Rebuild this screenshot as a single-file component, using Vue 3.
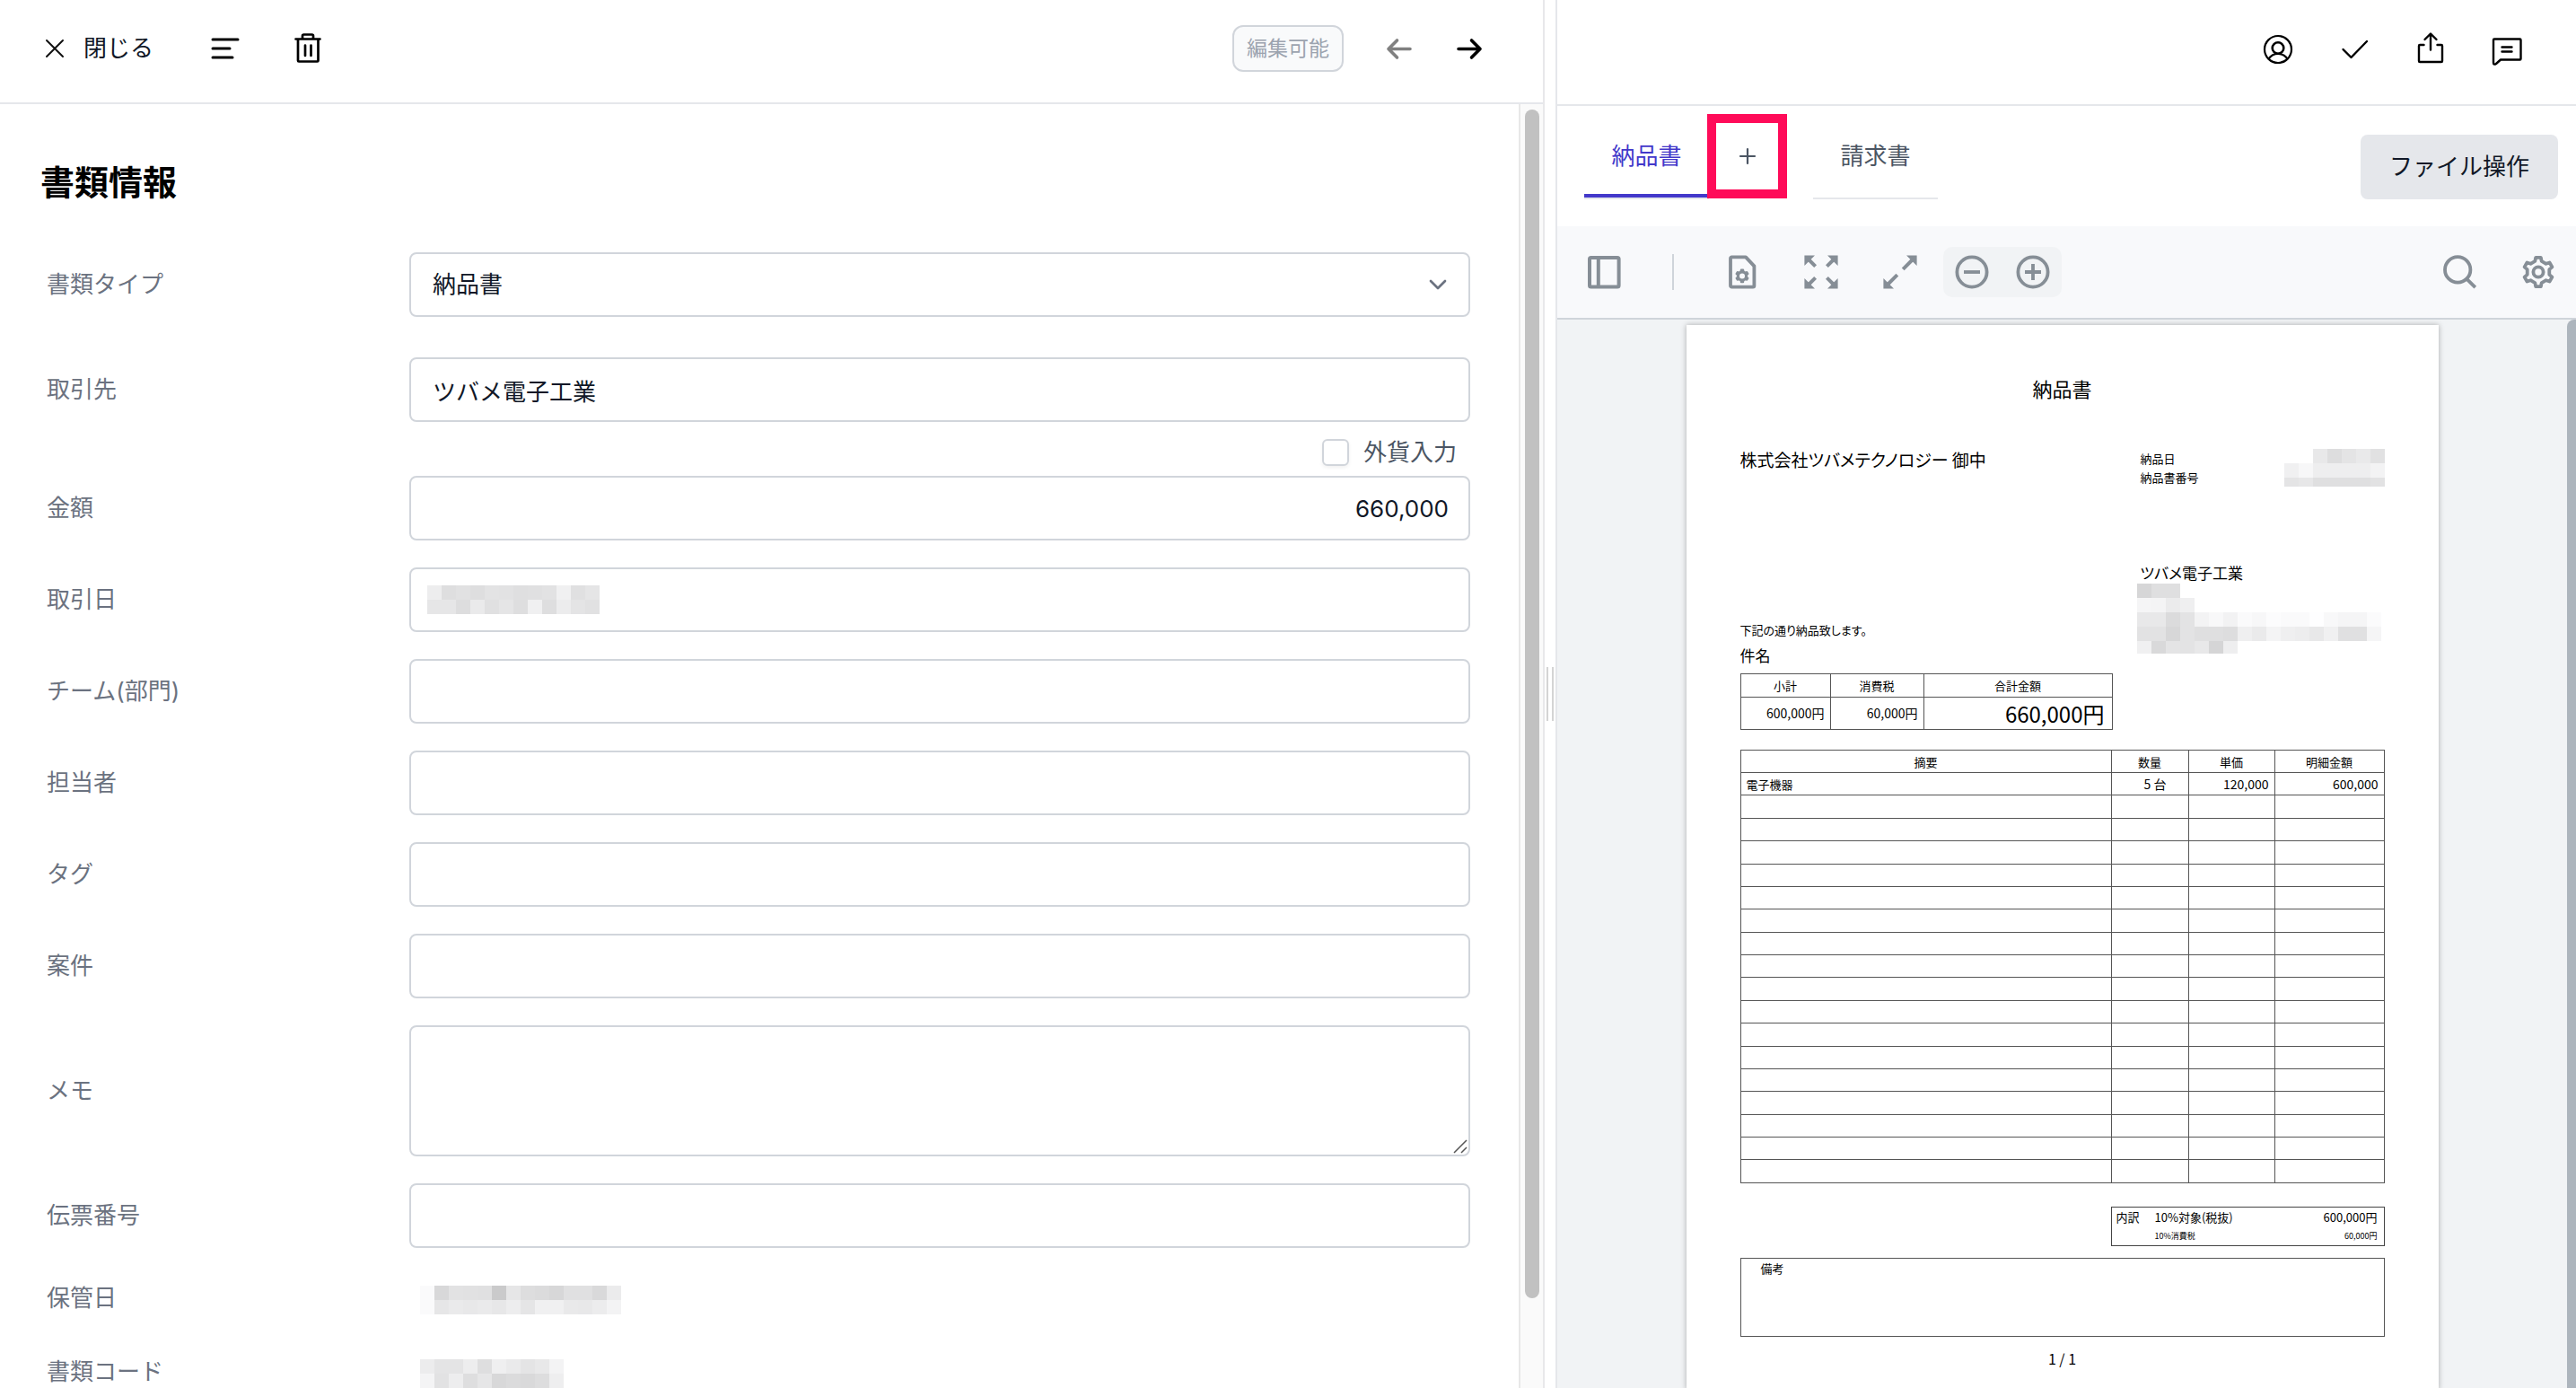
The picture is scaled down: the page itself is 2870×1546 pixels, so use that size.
<script setup>
import { ref, h } from 'vue'

const docType = ref('納品書')
const partner = ref('ツバメ電子工業')
const amount = ref('660,000')
const foreign = ref(false)
const memo = ref('')
const slip = ref('')

const midFields = ref([
  { id: 'team', label: 'チーム(部門)', value: '' },
  { id: 'owner', label: '担当者', value: '' },
  { id: 'tag', label: 'タグ', value: '' },
  { id: 'project', label: '案件', value: '' },
])

// Masked values: each number is a grey level, null leaves the cell empty.
const masks = {
  date: [
    [237, 222, 225, 222, 227, 226, 223, 224, 226, 240, 224, 229],
    [230, 230, 221, 234, 224, 229, 222, 240, 222, 236, 228, 225],
  ],
  stored: [
    [250, 216, 226, 225, 224, 202, 230, 221, 219, 215, 224, 224, 217, 235],
    [250, 230, 234, 232, 234, 231, 237, 229, 240, 240, 233, 232, 236, 243],
  ],
  code: [
    [236, 228, 228, 237, 222, 239, 234, 228, 232, 243],
    [244, 226, 237, 222, 230, 216, 219, 217, 221, 238],
  ],
  number: [
    [null, null, 232, 221, 228, 233, 225],
    [240, 247, 238, 238, 238, 238, 243],
    [228, 231, 223, 223, 223, 223, 226],
  ],
  address: [
    [214, 223, 223],
    [245, 244, 235, 239],
    [232, 232, 219, 227, 243, 248, 242, 250, 247, 252, 250, 250, 254, 248, 245, 245, 251],
    [226, 226, 215, 227, 223, 223, 221, 239, 234, 244, 239, 237, 232, 240, 224, 224, 245],
    [240, 217, 228, 227, 232, 213, 238],
  ],
}

const Mask = (props) => {
  const size = 16
  const cols = Math.max(...props.rows.map((r) => r.length))
  const height = props.rows.length * size - (props.trim || 0)
  const cells = props.rows.flatMap((row, y) =>
    row.map((g, x) =>
      g === null
        ? null
        : h('rect', { x: x * size, y: y * size, width: size, height: size, fill: `rgb(${g},${g},${g + 1})` })
    )
  )
  return h(
    'svg',
    { width: cols * size, height, viewBox: `0 0 ${cols * size} ${height}`, 'shape-rendering': 'crispEdges', 'aria-hidden': 'true' },
    cells
  )
}
Mask.props = ['rows', 'trim']

// Six-tooth gear outline around (cx, cy).
function gear(cx, cy, outer, inner) {
  const pts = []
  for (let i = 0; i < 6; i++) {
    const base = i * 60 - 90
    for (const [r, a] of [[inner, -17], [outer, -10], [outer, 10], [inner, 17]]) {
      const t = ((base + a) * Math.PI) / 180
      pts.push(`${(cx + r * Math.cos(t)).toFixed(2)} ${(cy + r * Math.sin(t)).toFixed(2)}`)
    }
  }
  return 'M' + pts.join('L') + 'Z'
}
const bigGear = gear(12, 12, 8.2, 6.3)
const smallGear = gear(12, 14.2, 3.5, 2.7)

const items = [
  { name: '電子機器', qty: '5 台', price: '120,000', total: '600,000' },
  ...Array.from({ length: 17 }, () => ({ name: '', qty: '', price: '', total: '' })),
]
</script>

<template>
  <div class="app">
    <section class="left">
      <header class="bar">
        <button class="plain close" type="button">
          <svg width="24" height="24" viewBox="0 0 24 24" fill="none" stroke="#111" stroke-width="2" stroke-linecap="round"><path d="M3 3l18 18M21 3L3 21" /></svg>
          <span>閉じる</span>
        </button>
        <button class="plain menu" type="button" aria-label="メニュー">
          <svg width="40" height="40" viewBox="0 0 40 40" fill="none" stroke="#000" stroke-width="3" stroke-linecap="round"><path d="M6 10h28M6 20h19M6 30h22" /></svg>
        </button>
        <button class="plain trash" type="button" aria-label="削除">
          <svg width="40" height="40" viewBox="0 0 40 40" fill="none" stroke="#000" stroke-width="2.7" stroke-linejoin="round" stroke-linecap="round"><path d="M6.500 9.500h27M9 9.500V33.500a1 1 0 0 0 1 1h20.500a1 1 0 0 0 1-1V9.500M14 9V6a1.500 1.500 0 0 1 1.500-1.500h9A1.500 1.500 0 0 1 26 6v3M17 16.500v11.500M23.500 16.500v11.500" /></svg>
        </button>
        <span class="grow"></span>
        <button class="badge" type="button">編集可能</button>
        <button class="plain prev" type="button" aria-label="前へ">
          <svg width="40" height="40" viewBox="0 0 40 40" fill="none" stroke="#808080" stroke-width="3.600" stroke-linecap="round" stroke-linejoin="round"><path d="M32 20.500H8M17.500 11L8 20.500l9.500 9.500" /></svg>
        </button>
        <button class="plain next" type="button" aria-label="次へ">
          <svg width="40" height="40" viewBox="0 0 40 40" fill="none" stroke="#000" stroke-width="3.600" stroke-linecap="round" stroke-linejoin="round"><path d="M8 20.500h24M22.500 11l9.500 9.500-9.500 9.500" /></svg>
        </button>
      </header>

      <div class="scroll">
        <form class="form" @submit.prevent>
          <h1>書類情報</h1>

          <div class="row">
            <label for="type">書類タイプ</label>
            <div class="control">
              <select id="type" v-model="docType" class="field">
                <option>納品書</option>
                <option>請求書</option>
              </select>
              <svg class="chevron" width="24" height="24" viewBox="0 0 24 24" fill="none" stroke="#6b7280" stroke-width="2.700" stroke-linecap="round" stroke-linejoin="round"><path d="M4 8l8 8 8-8" /></svg>
            </div>
          </div>

          <div class="row wide">
            <label for="partner">取引先</label>
            <input id="partner" v-model="partner" class="field kana" type="text" />
          </div>

          <div class="currency">
            <input id="foreign" v-model="foreign" type="checkbox" />
            <label for="foreign">外貨入力</label>
          </div>

          <div class="row">
            <label for="amount">金額</label>
            <input id="amount" v-model="amount" class="field number" type="text" />
          </div>

          <div class="row gap">
            <label for="date">取引日</label>
            <div class="control">
              <input id="date" class="field" type="text" />
              <Mask class="mask" :rows="masks.date" />
            </div>
          </div>

          <div v-for="f in midFields" :key="f.id" class="row gap">
            <label :for="f.id">{{ f.label }}</label>
            <input :id="f.id" v-model="f.value" class="field" type="text" />
          </div>

          <div class="row gap">
            <label for="memo">メモ</label>
            <div class="control">
              <textarea id="memo" v-model="memo" class="field"></textarea>
              <svg class="grip" width="16" height="16" viewBox="0 0 16 16" stroke="#555" stroke-width="1.500"><path d="M1 15L15 1M9 15l6-6" /></svg>
            </div>
          </div>

          <div class="row gap">
            <label for="slip">伝票番号</label>
            <input id="slip" v-model="slip" class="field" type="text" />
          </div>

          <dl class="static">
            <div class="pair">
              <dt>保管日</dt>
              <dd><Mask :rows="masks.stored" /></dd>
            </div>
            <div class="pair">
              <dt>書類コード</dt>
              <dd><Mask :rows="masks.code" /></dd>
            </div>
          </dl>
        </form>
        <div class="track" aria-hidden="true"><div class="thumb"></div></div>
      </div>
    </section>

    <div class="splitter" aria-hidden="true"><span></span></div>

    <section class="right">
      <header class="bar actions">
        <button class="plain" type="button" aria-label="ユーザー">
          <svg width="40" height="40" viewBox="0 0 40 40" fill="none" stroke="#000" stroke-width="2.200"><circle cx="20" cy="20" r="15" /><circle cx="20" cy="18.500" r="6.300" stroke-width="2.600" /><path d="M9.500 30.500C12 27 15.500 24.900 20 24.900s8 2.100 10.500 5.600" /></svg>
        </button>
        <button class="plain" type="button" aria-label="確認">
          <svg width="40" height="40" viewBox="0 0 40 40" fill="none" stroke="#000" stroke-width="2.400" stroke-linecap="round" stroke-linejoin="round"><path d="M7.500 20l9 9L34 11" /></svg>
        </button>
        <button class="plain" type="button" aria-label="共有">
          <svg width="40" height="40" viewBox="0 0 40 40" fill="none" stroke="#000" stroke-width="2.400" stroke-linecap="round" stroke-linejoin="round"><path d="M12.500 15H8a1 1 0 0 0-1 1v17a1 1 0 0 0 1 1h24a1 1 0 0 0 1-1V16a1 1 0 0 0-1-1h-4.500M20 20.500V3M13.500 9L20 2.500 26.500 9" /></svg>
        </button>
        <button class="plain" type="button" aria-label="コメント">
          <svg width="40" height="40" viewBox="0 0 40 40" fill="none" stroke="#000" stroke-width="2.400" stroke-linecap="round" stroke-linejoin="round"><path d="M6 8.500h28.500a1 1 0 0 1 1 1v21a1 1 0 0 1-1 1H13l-5 4.500C6.500 37 5 37 5 35V9.500a1 1 0 0 1 1-1zM14.500 17.500h11M14.500 22.500h11" /></svg>
        </button>
      </header>

      <div class="tabs">
        <button class="tab active" type="button">納品書</button>
        <button class="add" type="button" aria-label="追加">
          <svg width="24" height="24" viewBox="0 0 24 24" fill="none" stroke="#4b5563" stroke-width="2.200" stroke-linecap="round"><path d="M12 4v16M4 12h16" /></svg>
          <span class="ring"></span>
        </button>
        <button class="tab last" type="button">請求書</button>
        <span class="grow"></span>
        <button class="file" type="button">ファイル操作</button>
      </div>

      <div class="tools">
        <button class="plain" type="button" aria-label="サイドバー">
          <svg width="48" height="48" viewBox="0 0 24 24" fill="none" stroke="#868e96" stroke-width="2"><rect x="4" y="4" width="16.300" height="16.300" rx="0.800" /><path d="M8.900 4v16" /></svg>
        </button>
        <span class="divider"></span>
        <button class="plain" type="button" aria-label="ページ設定">
          <svg width="48" height="48" viewBox="0 0 24 24" fill="none" stroke="#868e96" stroke-linejoin="round"><path d="M6.200 3.700h7.800l4.700 5V19.600a0.700 0.700 0 0 1-.7.7H6.200a0.700 0.700 0 0 1-.7-.7V4.400a0.700 0.700 0 0 1 .7-.7z" stroke-width="1.900" /><path :d="smallGear" stroke-width="0.900" fill="#868e96" /><circle cx="12" cy="14.200" r="1.500" fill="#f8f9fb" stroke="none" /></svg>
        </button>
        <button class="plain" type="button" aria-label="全体表示">
          <svg width="48" height="48" viewBox="0 0 24 24" fill="#868e96" stroke="#868e96" stroke-width="2"><path stroke="none" d="M2.700 2.700h5.800L2.700 8.500zM21.300 2.700v5.800L15.500 2.700zM2.700 21.300v-5.800l5.800 5.800zM21.300 21.300h-5.800l5.800-5.800z" /><path d="M4.500 4.500l4.300 4.300M19.500 4.500l-4.300 4.300M4.500 19.500l4.300-4.300M19.500 19.500l-4.300-4.300" /></svg>
        </button>
        <button class="plain" type="button" aria-label="拡大">
          <svg width="48" height="48" viewBox="0 0 24 24" fill="#868e96" stroke="#868e96" stroke-width="2"><path stroke="none" d="M21.300 2.700v5.800L15.500 2.700zM2.700 21.300v-5.800l5.800 5.800z" /><path d="M19.500 4.500l-5.900 5.900M4.500 19.500l5.900-5.900" /></svg>
        </button>
        <div class="zoom">
          <button class="plain" type="button" aria-label="縮小表示">
            <svg width="48" height="48" viewBox="0 0 24 24" fill="none" stroke="#868e96" stroke-width="1.900"><circle cx="12" cy="12" r="8.300" /><path d="M7.500 12h9" /></svg>
          </button>
          <button class="plain" type="button" aria-label="拡大表示">
            <svg width="48" height="48" viewBox="0 0 24 24" fill="none" stroke="#868e96" stroke-width="1.900"><circle cx="12" cy="12" r="8.300" /><path d="M7.500 12h9M12 7.500v9" /></svg>
          </button>
        </div>
        <span class="grow"></span>
        <button class="plain" type="button" aria-label="検索">
          <svg width="48" height="48" viewBox="0 0 24 24" fill="none" stroke="#868e96" stroke-width="1.900"><circle cx="11.100" cy="10.700" r="7.100" /><path d="M16.200 15.900l4.700 4.700" /></svg>
        </button>
        <button class="plain" type="button" aria-label="設定">
          <svg width="48" height="48" viewBox="0 0 24 24" fill="none" stroke="#868e96" stroke-width="1.900" stroke-linejoin="round"><path :d="bigGear" /><circle cx="12" cy="12" r="2.800" /></svg>
        </button>
      </div>

      <div class="viewer">
        <div class="stage">
          <article class="page">
            <h2>納品書</h2>
            <div class="head">
              <div class="to">
                <p class="recipient">株式会社ツバメテクノロジー 御中</p>
                <p class="note">下記の通り納品致します。</p>
                <p class="subject">件名</p>
              </div>
              <div class="from">
                <div class="meta">
                  <div>
                    <p>納品日</p>
                    <p>納品書番号</p>
                  </div>
                  <Mask :rows="masks.number" :trim="6" />
                </div>
                <p class="company">ツバメ電子工業</p>
                <Mask :rows="masks.address" :trim="2" />
              </div>
            </div>

            <table class="sum">
              <colgroup><col class="c100" /><col class="c104" /><col /></colgroup>
              <thead>
                <tr><th>小計</th><th>消費税</th><th>合計金額</th></tr>
              </thead>
              <tbody>
                <tr><td>600,000円</td><td>60,000円</td><td class="grand">660,000円</td></tr>
              </tbody>
            </table>

            <table class="items">
              <colgroup><col /><col class="c86" /><col class="c96" /><col class="c123" /></colgroup>
              <thead>
                <tr><th>摘要</th><th>数量</th><th>単価</th><th>明細金額</th></tr>
              </thead>
              <tbody>
                <tr v-for="(it, i) in items" :key="i">
                  <td class="name">{{ it.name }}</td>
                  <td class="qty">{{ it.qty }}</td>
                  <td>{{ it.price }}</td>
                  <td>{{ it.total }}</td>
                </tr>
              </tbody>
            </table>

            <div class="tax">
              <span>内訳</span><span>10%対象(税抜)</span><span class="num">600,000円</span>
              <span></span><small>10%消費税</small><small class="num">60,000円</small>
            </div>
            <div class="remarks">備考</div>
            <p class="pageno">1 / 1</p>
          </article>
        </div>
        <div class="viewbar" aria-hidden="true"></div>
      </div>
    </section>
  </div>
</template>

<style>
body {
  margin: 0;
  background: #fff;
}
</style>

<style scoped>
* {
  box-sizing: border-box;
}
.app {
  display: grid;
  grid-template-columns: minmax(0, 1721fr) 12px minmax(0, 1137fr);
  height: 100vh;
  overflow: hidden;
  font-family: Inter, "Noto Sans CJK JP", sans-serif;
  font-size: 26px;
  line-height: 36px;
  color: #111827;
}
button,
input,
select,
textarea {
  font: inherit;
  color: inherit;
  margin: 0;
}
button {
  border: 0;
  background: none;
  padding: 0;
  cursor: pointer;
}
svg {
  display: block;
  flex: none;
}
h1,
h2,
p,
dl,
dd {
  margin: 0;
}
.grow {
  flex: 1;
}
.left,
.right {
  display: flex;
  flex-direction: column;
  min-height: 0;
}
.left {
  border-right: 2px solid #e8e8ea;
}
.right {
  border-left: 2px solid #e5e7eb;
}
.bar {
  display: flex;
  align-items: center;
  flex: none;
  height: 116px;
  padding: 0 62px 6px 49px;
  border-bottom: 2px solid #e5e7eb;
}
.close {
  display: flex;
  align-items: center;
  gap: 20px;
}
.menu {
  margin-left: 60px;
}
.trash {
  margin-left: 52px;
}
.badge {
  width: 124px;
  height: 52px;
  border: 2px solid #d1d5db;
  border-radius: 12px;
  background: #f9fafb;
  color: #9ca3af;
  font-size: 23px;
}
.prev {
  margin-left: 42px;
}
.next {
  margin-left: 38px;
}
.scroll {
  flex: 1;
  display: flex;
  min-height: 0;
  overflow: hidden;
}
.form {
  flex: 1;
  min-width: 0;
  padding: 63px 54px 0 45px;
}
h1 {
  font-size: 38px;
  line-height: 48px;
  font-weight: 700;
  color: #000;
  margin-bottom: 54px;
}
.row,
.pair {
  display: grid;
  grid-template-columns: 404px minmax(0, 1fr);
  align-items: center;
  padding-left: 7px;
  color: #6b7280;
}
.row.wide {
  margin-top: 45px;
}
.row.gap {
  margin-top: 30px;
}
.control {
  position: relative;
}
.field {
  display: block;
  width: 100%;
  height: 72px;
  padding: 0 22px 0 24px;
  border: 2px solid #d1d5db;
  border-radius: 8px;
  background: #fff;
  color: #111827;
  appearance: none;
  outline: none;
}
textarea.field {
  height: 146px;
  resize: none;
}
.kana {
  font-family: "Noto Sans CJK JP", sans-serif;
}
.number {
  text-align: right;
}
.chevron {
  position: absolute;
  top: 24px;
  right: 24px;
  pointer-events: none;
}
.mask {
  position: absolute;
  top: 20px;
  left: 20px;
}
.grip {
  position: absolute;
  right: 3px;
  bottom: 3px;
  pointer-events: none;
}
.currency {
  display: flex;
  align-items: center;
  justify-content: flex-end;
  gap: 16px;
  height: 60px;
  padding: 7px 15px 0 0;
  color: #4b5563;
}
.currency input {
  appearance: none;
  width: 30px;
  height: 30px;
  border: 2px solid #d1d5db;
  border-radius: 6px;
  background: #fff;
  box-shadow: 0 2px 4px rgba(0, 0, 0, 0.06);
}
.static {
  margin-top: 15px;
}
.pair {
  height: 82px;
}
.pair dd {
  padding: 4px 0 0 12px;
}
.track {
  flex: none;
  width: 27px;
  padding: 6px 0 0 5px;
  border-left: 2px solid #e8e8e8;
  background: #fafafa;
}
.thumb {
  width: 16px;
  height: 93%;
  border-radius: 8px;
  background: #c1c1c1;
}
.splitter {
  display: flex;
  align-items: center;
  justify-content: center;
}
.splitter span {
  width: 8px;
  height: 60px;
  border: solid #d4d4d4;
  border-width: 0 2px;
}
.actions {
  height: 118px;
  justify-content: flex-end;
  gap: 45px;
  padding-right: 57px;
}
.tabs {
  display: flex;
  align-items: flex-start;
  flex: none;
  height: 134px;
  padding: 8px 20px 0 30px;
}
.tab {
  width: 139px;
  height: 96px;
  padding-top: 2px;
  border-bottom: 2px solid #e5e7eb;
  color: #4b5563;
}
.tab.active {
  color: #4338ca;
  box-shadow: inset 0 -4px #4338ca;
}
.tab.last {
  margin-left: 31px;
}
.add {
  position: relative;
  display: flex;
  align-items: center;
  justify-content: center;
  width: 85px;
  height: 96px;
}
.ring {
  position: absolute;
  inset: 1px -2px;
  border: 10px solid #ff0b59;
}
.file {
  width: 220px;
  height: 72px;
  margin-top: 24px;
  border-radius: 8px;
  background: #e5e7eb;
}
.tools {
  display: flex;
  align-items: center;
  flex: none;
  height: 104px;
  gap: 40px;
  padding: 0 18px 0 28px;
  background: #f8f9fb;
  border-bottom: 2px solid #cfd4da;
}
.divider {
  width: 2px;
  height: 40px;
  margin: 0 12px;
  background: #cfd4da;
}
.zoom {
  display: flex;
  align-items: center;
  gap: 20px;
  height: 56px;
  margin-left: -16px;
  padding: 0 8px;
  border-radius: 10px;
  background: #f1f3f5;
}
.viewer {
  flex: 1;
  display: flex;
  min-height: 0;
  overflow: hidden;
  background: #f1f3f5;
}
.stage {
  flex: 1;
  display: flex;
  justify-content: center;
  align-items: flex-start;
  padding-top: 6px;
}
.viewbar {
  width: 10px;
  border-radius: 8px 0 0 0;
  background: #adb5bd;
}
.page {
  flex: none;
  width: 838px;
  min-height: 1186px;
  padding: 54px 60px 20px;
  background: #fff;
  box-shadow: 0 0 6px rgba(0, 0, 0, 0.3);
  color: #000;
  font-family: "Noto Sans CJK JP", sans-serif;
  font-size: 13px;
  line-height: 21px;
  font-feature-settings: "palt";
}
h2 {
  text-align: center;
  font-size: 22px;
  line-height: 32px;
  font-weight: 400;
}
.head {
  display: flex;
  justify-content: space-between;
}
.to {
  padding-top: 49px;
}
.recipient {
  font-size: 19px;
  line-height: 30px;
}
.note {
  margin-top: 165px;
  line-height: 20px;
}
.subject {
  margin-top: 6px;
  font-size: 17px;
  line-height: 24px;
}
.from {
  width: 276px;
  padding-top: 52px;
}
.meta {
  display: flex;
  justify-content: space-between;
  padding-left: 4px;
}
.company {
  margin-top: 84px;
  padding-left: 4px;
  font-size: 17px;
  line-height: 24px;
}
table {
  border-collapse: collapse;
  table-layout: fixed;
}
th,
td {
  height: 25px;
  padding: 0 6px;
  border: 1px solid #555;
  font-weight: 400;
}
td {
  text-align: right;
  font-size: 14px;
}
.sum {
  width: 415px;
  height: 63px;
  margin-top: 8px;
}
.sum th {
  height: 26px;
}
.sum .grand {
  font-size: 24px;
  padding-right: 8px;
}
.items {
  width: 718px;
  height: 483px;
  margin-top: 22px;
}
.items .name {
  text-align: left;
  font-size: 13px;
}
.items .qty {
  padding-right: 24px;
}
.c86 {
  width: 86px;
}
.c96 {
  width: 96px;
}
.c100 {
  width: 100px;
}
.c104 {
  width: 104px;
}
.c123 {
  width: 122px;
}
.tax {
  display: grid;
  grid-template-columns: 43px 1fr auto;
  align-content: center;
  width: 305px;
  height: 44px;
  margin: 26px 0 0 auto;
  padding: 0 7px 0 5px;
  border: 1px solid #444;
}
.tax small {
  font-size: 9px;
}
.num {
  text-align: right;
}
.remarks {
  height: 88px;
  margin-top: 13px;
  padding: 0 22px;
  border: 1px solid #555;
}
.pageno {
  margin-top: 12px;
  text-align: center;
  font-size: 16px;
  line-height: 24px;
}
</style>
